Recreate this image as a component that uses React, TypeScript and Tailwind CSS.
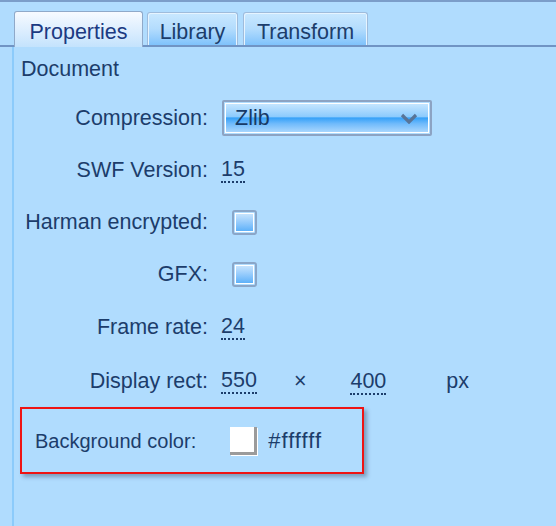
import React from 'react';

const TEXT = 'text-[#1c3d6b]';

function Tab({ label, active, width }: { label: string; active?: boolean; width: string }) {
  if (active) {
    return (
      <div
        className={`${width} h-[36px] -mb-[2px] rounded-t-[3px] border border-b-0 border-[#8fa9c9] bg-gradient-to-b from-[#f7faff] to-[#c4e3fd] flex items-end justify-center pb-[3px] text-[21.5px] leading-[24px] text-[#1b3a82] relative z-10`}
      >
        {label}
      </div>
    );
  }
  return (
    <div
      className={`${width} h-[33px] rounded-t-[3px] border border-b-0 border-[#9fbcdc] bg-gradient-to-b from-[#c9e8ff] via-[#b3dcfd] to-[#7fc2fb] shadow-[inset_1px_1px_0_#e6f4ff,inset_-1px_0_0_#e6f4ff] flex items-end justify-center pb-[1px] text-[21.5px] leading-[24px] ${TEXT}`}
    >
      {label}
    </div>
  );
}

function Checkbox() {
  return (
    <div className="ml-[11px] w-[25px] h-[25px] rounded-[3px] border-2 border-[#8aa6c8] p-px">
      <div className="w-full h-full border border-white bg-gradient-to-b from-[#c6e3fd] to-[#5db1f9]" />
    </div>
  );
}

function Num({ children }: { children: React.ReactNode }) {
  return <span className="border-b-2 border-dotted border-[#1c3d6b] leading-[24px]">{children}</span>;
}

function Row({ label, h, children }: { label: string; h: string; children?: React.ReactNode }) {
  return (
    <div className={`flex items-center ${h}`}>
      <div className="w-[195px] text-right pr-px">{label}</div>
      <div className="ml-[12px] flex items-center">{children}</div>
    </div>
  );
}

export default function App() {
  return (
    <div
      className={`w-[556px] h-[526px] overflow-hidden bg-[#b0dcfe] border-t-2 border-[#7b9dc9] flex flex-col ${TEXT}`}
      style={{ fontFamily: '"Liberation Sans", Arial, sans-serif' }}
    >
      {/* Tab strip */}
      <div className="h-[45px] flex items-end pl-[14px] border-b-2 border-[#7094c4] shrink-0">
        <Tab label="Properties" active width="w-[129px]" />
        <div className="ml-[4px]">
          <Tab label="Library" width="w-[91px]" />
        </div>
        <div className="ml-[5px]">
          <Tab label="Transform" width="w-[125px]" />
        </div>
      </div>

      {/* Panel */}
      <div className="ml-[12px] flex-1 border-l-2 border-[#8ccbfb] text-[21.5px]">
        <div className="pl-[7px] pt-[9px] h-[45px] leading-[26px]">Document</div>

        <Row label="Compression:" h="h-[52px]">
          <div className="ml-px w-[210px] h-[36px] rounded-[2px] border-2 border-[#8ca3c3] p-px">
            <div className="h-full border border-white bg-[linear-gradient(to_bottom,#c4e5ff_0%,#8ccbfd_45%,#36a1f8_50%,#6fbafb_70%,#a9d6fd_100%)] flex items-center justify-between pl-[9px] pr-[10px]">
              <span className="text-[#173a66]">Zlib</span>
              <svg width="18" height="11" viewBox="0 0 18 11">
                <path d="M2 2 L9 9 L16 2" fill="none" stroke="#587497" strokeWidth="3.2" />
              </svg>
            </div>
          </div>
        </Row>

        <Row label="SWF Version:" h="h-[52px]">
          <Num>15</Num>
        </Row>

        <Row label="Harman encrypted:" h="h-[52px]">
          <Checkbox />
        </Row>

        <Row label="GFX:" h="h-[52px]">
          <Checkbox />
        </Row>

        <Row label="Frame rate:" h="h-[54px]">
          <Num>24</Num>
        </Row>

        <Row label="Display rect:" h="h-[54px]">
          <Num>550</Num>
          <span className="ml-[37px]">×</span>
          <span className="ml-[44px]">
            <Num>400</Num>
          </span>
          <span className="ml-[60px]">px</span>
        </Row>

        <div className="ml-[6px] mt-[-1px] w-[344px] h-[67px] border-2 border-[#ee1414] shadow-[3px_3px_4px_rgba(60,80,110,0.45)] flex items-center pl-[13px] text-[20px]">
          <span>Background color:</span>
          <div className="ml-[34px] w-[27px] h-[28px] bg-white border-r-[3px] border-b-[3px] border-[#9b9b9b] shadow-[1px_1px_0_#ffffff]" />
          <span className="ml-[11px] text-[22px] tracking-[1px]">#ffffff</span>
        </div>
      </div>
    </div>
  );
}
